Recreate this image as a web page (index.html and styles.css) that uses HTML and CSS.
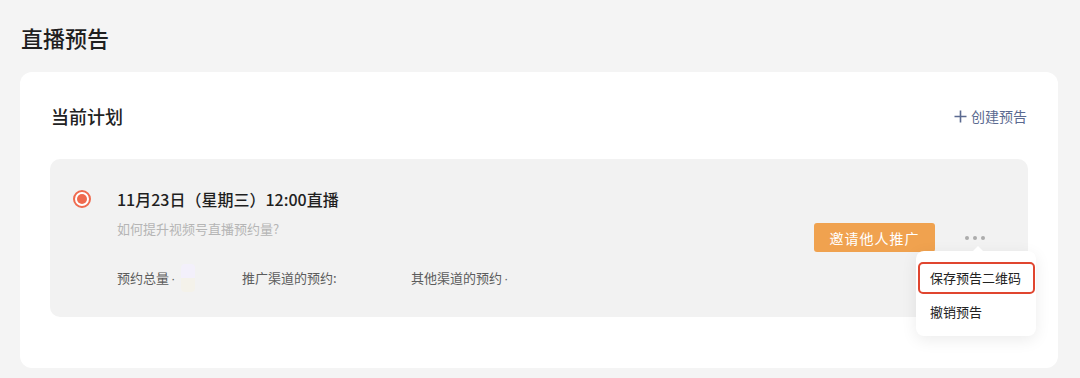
FILE: index.html
```html
<!DOCTYPE html>
<html lang="zh-CN">
<head>
<meta charset="utf-8">
<title>直播预告</title>
<link rel="stylesheet" href="styles.css">
</head>
<body>
  <h1 class="page-title">直播预告</h1>
  <section class="card">
    <div class="card-head">
      <h2 class="card-title">当前计划</h2>
      <a class="create-link"><svg class="plus" width="13" height="13" viewBox="0 0 13 13"><path d="M6.5 0.5V12.5M0.5 6.5H12.5" stroke="#5b6a90" stroke-width="1.6" fill="none"/></svg>创建预告</a>
    </div>
    <div class="plan">
      <div class="plan-main">
        <div class="plan-row">
          <span class="radio"><span class="radio-dot"></span></span>
          <div class="plan-text">
            <div class="plan-title">11月23日（星期三）12:00直播</div>
            <div class="plan-sub">如何提升视频号直播预约量?</div>
            <div class="stats">
              <span class="stat stat-total">预约总量<span class="sep">·</span><span class="blob"></span></span>
              <span class="stat stat-promo">推广渠道的预约:</span>
              <span class="stat">其他渠道的预约<span class="sep">·</span></span>
            </div>
          </div>
        </div>
      </div>
      <div class="plan-actions">
        <button class="invite-btn">邀请他人推广</button>
        <div class="more">
          <span class="dot"></span><span class="dot"></span><span class="dot"></span>
          <div class="menu">
            <div class="menu-item menu-item-active">保存预告二维码</div>
            <div class="menu-item">撤销预告</div>
          </div>
        </div>
      </div>
    </div>
  </section>
</body>
</html>
```

FILE: styles.css
```css
* { box-sizing: border-box; }
body {
  margin: 0;
  padding: 0 22px 0 20px;
  background: #f4f4f4;
  font-family: "Noto Sans CJK SC", "Noto Sans", sans-serif;
  color: #1f1f1f;
}
.page-title {
  margin: 0 0 20px 1px;
  padding-top: 22px;
  font-size: 22px;
  line-height: 30px;
  font-weight: 500;
}
.card {
  background: #fff;
  border-radius: 12px;
  padding: 31px 30px 51px 30px;
}
.card-head {
  display: flex;
  justify-content: space-between;
  align-items: center;
  height: 26px;
  margin-bottom: 30px;
}
.card-title {
  margin: 0 0 0 1px;
  font-size: 18px;
  line-height: 26px;
  font-weight: 500;
  color: #222;
}
.create-link {
  display: flex;
  align-items: center;
  font-size: 14px;
  color: #5b6a90;
  margin-right: 1px;
}
.plus {
  margin-right: 4px;
}
.plan {
  position: relative;
  display: flex;
  align-items: center;
  justify-content: space-between;
  background: #f2f2f2;
  border-radius: 10px;
  padding: 28px 43px 29px 23px;
}
.plan-row {
  display: flex;
  align-items: flex-start;
}
.radio {
  width: 18px;
  height: 18px;
  border: 2px solid #ef6a4e;
  border-radius: 50%;
  display: flex;
  align-items: center;
  justify-content: center;
  margin-top: 3px;
  margin-right: 26px;
  background: #fff;
}
.radio-dot {
  width: 10px;
  height: 10px;
  border-radius: 50%;
  background: #ef6a4e;
}
.plan-title {
  font-size: 16px;
  line-height: 24px;
  font-weight: 500;
  color: #1f1f1f;
}
.plan-sub {
  margin-top: 8px;
  font-size: 13px;
  line-height: 20px;
  color: #b5b5b5;
}
.stats {
  margin-top: 29px;
  display: flex;
  font-size: 13px;
  line-height: 20px;
  color: #5c5c5c;
}
.stat { display: flex; align-items: center; }
.stat-total { width: 125px; }
.stat-promo { width: 169px; }
.sep {
  font-family: "Liberation Sans", sans-serif;
  margin-left: 2px;
  position: relative;
  top: 1px;
}
.blob {
  display: inline-block;
  width: 14px;
  height: 28px;
  margin: -4px 0 -4px 6px;
  border-radius: 4px;
  background: linear-gradient(#f3f0fb 0%, #f3f0fb 50%, #f4f2ea 50%, #f4f2ea 100%);
}
.plan-actions {
  display: flex;
  align-items: center;
}
.invite-btn {
  width: 121px;
  height: 29px;
  border: none;
  border-radius: 3px;
  background: #f0a24f;
  color: #fff;
  font-family: inherit;
  font-size: 14px;
  letter-spacing: 1px;
  padding: 0;
  margin-right: 30px;
}
.more {
  position: relative;
  display: flex;
  gap: 4px;
  width: 20px;
  align-items: center;
}
.dot {
  width: 4px;
  height: 4px;
  border-radius: 50%;
  background: #acacac;
}
.menu {
  position: absolute;
  left: -49px;
  top: 15px;
  width: 120px;
  background: #fff;
  border-radius: 8px;
  padding: 11px 1px 8px 2px;
  box-shadow: 0 4px 16px rgba(0, 0, 0, 0.08);
}
.menu::before {
  content: "";
  position: absolute;
  top: -5px;
  left: 56px;
  border-left: 6px solid transparent;
  border-right: 6px solid transparent;
  border-bottom: 6px solid #fff;
}
.menu-item {
  height: 32px;
  display: flex;
  align-items: center;
  padding-left: 12px;
  font-size: 13px;
  color: #222;
}
.menu-item-active {
  border: 2px solid #e0452f;
  border-radius: 5px;
  padding-left: 10px;
  margin-bottom: 2px;
}
```
